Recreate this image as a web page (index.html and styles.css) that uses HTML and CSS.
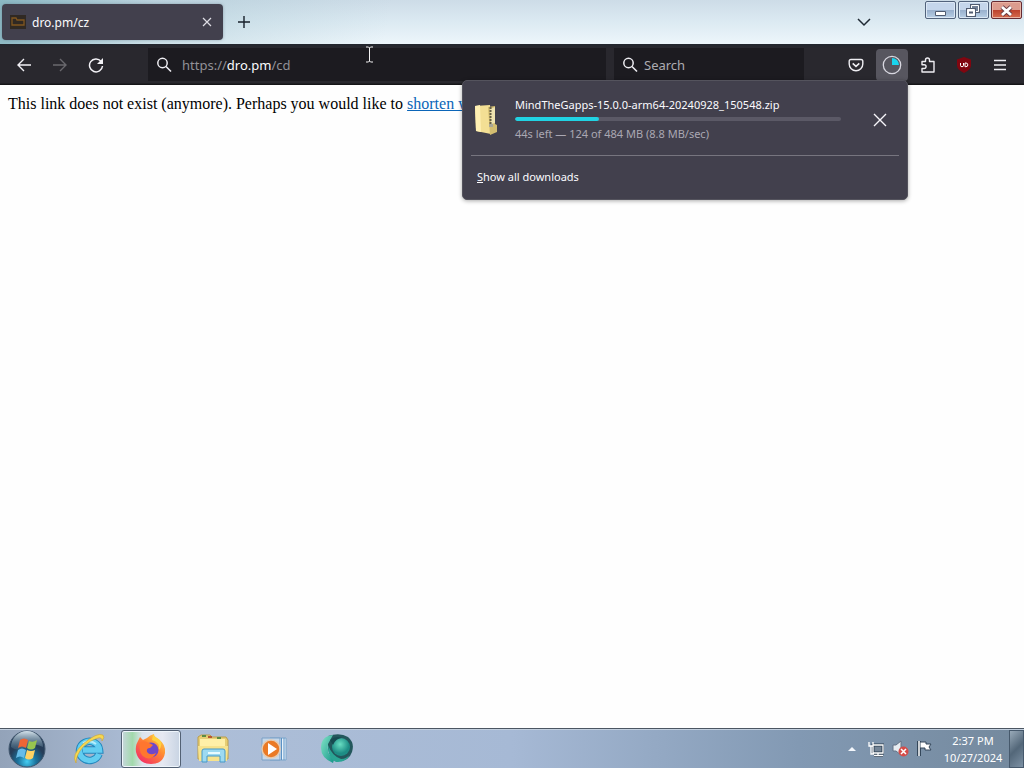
FILE: index.html
```
<!DOCTYPE html>
<html lang="en">
<head>
<meta charset="utf-8">
<title>dro.pm/cz</title>
<link rel="stylesheet" href="styles.css">
</head>
<body>
<div class="desktop">
  <header class="titlebar">
    <div class="tab">
      <svg class="favicon" width="16" height="14" viewBox="0 0 16 14"><path fill="#302923" d="M0 0h16v14H0z"/><path d="M2 10V3h4l1 2h7v5z" fill="none" stroke="#80561f" stroke-width="1.3"/></svg>
      <span class="tab-title">dro.pm/cz</span>
      <button class="tab-close" aria-label="Close tab"><svg width="10" height="10" viewBox="0 0 10 10"><path d="M1 1l8 8M9 1L1 9" stroke="#dedde4" stroke-width="1.2"/></svg></button>
    </div>
    <button class="new-tab" aria-label="New tab"><svg width="12" height="12" viewBox="0 0 12 12"><path d="M6 0v12M0 6h12" stroke="#17202a" stroke-width="1.4"/></svg></button>
    <button class="all-tabs" aria-label="List all tabs"><svg width="14" height="9" viewBox="0 0 14 9"><path d="M1 1l6 6 6-6" fill="none" stroke="#202a34" stroke-width="1.5"/></svg></button>
    <div class="window-controls">
      <button aria-label="Minimize"><svg width="31" height="17" viewBox="0 0 31 17"><path d="M10.500 9.500h10v4h-10z" fill="#fff" stroke="#505b70"/></svg></button>
      <button aria-label="Restore"><svg width="31" height="17" viewBox="0 0 31 17"><path d="M13.500 3.500h7v6h-7z" fill="#a0b3cd" stroke="#505b70" stroke-width="3"/><path d="M13.500 3.500h7v6h-7z" fill="#738197" stroke="#fff"/><path d="M9.500 7.500h7v6h-7z" fill="#a0b3cd" stroke="#505b70" stroke-width="3"/><path d="M9.500 7.500h7v6h-7z" fill="#fff" stroke="#fff"/><path d="M11 9.500h4v2h-4z" fill="#505b70"/></svg></button>
      <button class="win-close" aria-label="Close"><svg width="31" height="17" viewBox="0 0 31 17"><path d="M11 5l9 8M20 5l-9 8" stroke="#683b42" stroke-width="4.500"/><path d="M11 5l9 8M20 5l-9 8" stroke="#fff" stroke-width="2.800"/></svg></button>
    </div>
  </header>

  <nav class="toolbar">
    <div class="nav-buttons">
      <button aria-label="Back"><svg width="16" height="16" viewBox="0 0 16 16"><path d="M15 8H2M8 2L2 8l6 6" fill="none" stroke="#f2f1f6" stroke-width="1.400"/></svg></button>
      <button aria-label="Forward" disabled><svg width="16" height="16" viewBox="0 0 16 16"><path d="M1 8h13M8 2l6 6-6 6" fill="none" stroke="#69686d" stroke-width="1.400"/></svg></button>
      <button aria-label="Reload"><svg width="16" height="16" viewBox="0 0 16 16"><path d="M13 4.200A6.500 6.500 0 1 0 14.500 9" fill="none" stroke="#f2f1f6" stroke-width="1.500"/><path d="M15 1v6H9z" fill="#f2f1f6"/></svg></button>
    </div>
    <div class="field address">
      <svg width="16" height="16" viewBox="0 0 16 16"><circle cx="6.500" cy="6" r="4.700" fill="none" stroke="#eeedf2" stroke-width="1.500"/><path d="M10 9.500l5 5" stroke="#eeedf2" stroke-width="1.600"/></svg>
      <div class="url" role="textbox" aria-label="Address" contenteditable="true" spellcheck="false">https://<span class="domain">dro.pm</span>/cd</div>
    </div>
    <label class="field search">
      <svg width="16" height="16" viewBox="0 0 16 16"><circle cx="6.500" cy="6" r="4.700" fill="none" stroke="#eeedf2" stroke-width="1.500"/><path d="M10 9.500l5 5" stroke="#eeedf2" stroke-width="1.600"/></svg>
      <input type="text" placeholder="Search" aria-label="Search">
    </label>
    <div class="tools">
      <button aria-label="Pocket"><svg width="16" height="16" viewBox="0 0 16 16"><path d="M3 2.500h10q1.800 0 1.800 1.800V7a6.800 6.800 0 0 1-13.600 0V4.300Q1.200 2.500 3 2.500z" fill="none" stroke="#eeedf2" stroke-width="1.400"/><path d="M4.700 6.300L8 9.300l3.300-3" fill="none" stroke="#eeedf2" stroke-width="1.600"/></svg></button>
      <button class="active" aria-label="Downloads"><svg width="20" height="20" viewBox="0 0 20 20"><circle cx="10" cy="10" r="8.700" fill="none" stroke="#d8d7e0" stroke-width="1.300"/><path d="M10 10V3a7 7 0 0 1 7 7z" fill="#19d5ed"/></svg></button>
      <button aria-label="Extensions"><svg width="16" height="18" viewBox="0 0 16 18"><path d="M2 5.500h3.500V4a2 2 0 0 1 4 0v1.500H14V16H2v-3.500h2.200a1.900 1.900 0 0 0 0-3.800H2z" fill="none" stroke="#eeedf2" stroke-width="1.400" stroke-linejoin="round"/></svg></button>
      <button aria-label="uBlock Origin"><svg width="16" height="16" viewBox="0 0 16 16"><path d="M8 0l7 2.500v6q0 4-7 7.500-7-3.500-7-7.500v-6z" fill="#800610"/><path d="M4.500 6v2.500q0 1.200 1.500 1.200t1.500-1.200V6M9 6v3.700h1q1.800 0 1.800-1.800T10 6z" fill="none" stroke="#fff"/></svg></button>
      <button aria-label="Menu"><svg width="14" height="12" viewBox="0 0 14 12"><path d="M1 1.500h12M1 6h12M1 10.500h12" stroke="#f0eff4" stroke-width="1.300"/></svg></button>
    </div>
  </nav>

  <main class="page">
    <p>This link does not exist (anymore). Perhaps you would like to <a href="#">shorten w</a></p>
  </main>

  <section class="downloads" aria-label="Downloads">
    <div class="download">
      <svg class="zip" width="24" height="32" viewBox="0 0 24 32"><path d="M1 2l15-1 1 29-15-3z" fill="#f3df94"/><path d="M1 2l5-1 1 27-5-1z" fill="#fff0b3"/><path d="M14 3l7-1v18l2 1v7l-7 3z" fill="#d3bd70"/><path d="M16 5l5-2v16l-4 1z" fill="#eee3b0"/><path d="M16.500 3v17" stroke="#655f46" stroke-width="2" stroke-dasharray="2 1"/><path d="M15 20h4v3h-4z" fill="#aaa797"/></svg>
      <div class="details">
        <div class="filename">MindTheGapps-15.0.0-arm64-20240928_150548.zip</div>
        <progress value="124" max="484" aria-label="Download progress"></progress>
        <div class="status">44s left — 124 of 484 MB (8.8 MB/sec)</div>
      </div>
      <button class="cancel" aria-label="Cancel download"><svg width="14" height="14" viewBox="0 0 14 14"><path d="M1 1l12 12M13 1L1 13" stroke="#f7f6fb" stroke-width="1.400"/></svg></button>
    </div>
    <button class="show-all"><u>S</u>how all downloads</button>
  </section>

  <svg class="cursor" width="9" height="17" viewBox="0 0 9 17"><path d="M1 1h2.500l1 1 1-1H8M1 16h2.500l1-1 1 1H8M4.500 2v13" fill="none" stroke="#f4f4f4"/></svg>

  <footer class="taskbar">
    <button class="start" aria-label="Start"><svg width="40" height="38" viewBox="0 0 40 38">
      <defs><radialGradient id="orb" cy="85%"><stop offset="0" stop-color="#45cdf2"/><stop offset=".5" stop-color="#1b739d"/><stop offset="1" stop-color="#263d58"/></radialGradient><linearGradient id="shine" x2="0" y2="1"><stop stop-color="#d5e3ec"/><stop offset="1" stop-color="#577b92" stop-opacity=".3"/></linearGradient></defs>
      <circle cx="20" cy="19" r="18" fill="url(#orb)" stroke="#41576e"/><path d="M4 17A16 16 0 0 1 36 17Q27 12 20 17 10 22 4 17z" fill="url(#shine)"/>
      <path d="M13 10q4-3 8 0l-2 8q-4-3-8 0z" fill="#ed6536"/><path d="M22 11q4 2 8-1l-2 8q-4 3-8 0z" fill="#98c54f"/><path d="M11 20q4-3 8 0l-2 8q-4-3-8 0z" fill="#66bce8"/><path d="M20 20q4 2 8 0l-2 8q-4 3-8 0z" fill="#ffd263"/></svg></button>
    <button class="task" aria-label="Internet Explorer"><svg width="32" height="32" viewBox="0 0 32 32"><path d="M26 21a10 9.500 0 1 1 .5-4H10" fill="none" stroke="#2387bd" stroke-width="7.500"/><path d="M26 21a10 9.500 0 1 1 .5-4H10" fill="none" stroke="#62cdf1" stroke-width="5.500"/><path d="M10 10q7-4 13 1" fill="none" stroke="#b4edfc" stroke-width="2"/><path d="M3 30Q-2 22 10 11 24-1 30 2q2 2-1 6 0-4-4-3-8 2-15 9Q3 22 3 30z" fill="#f7d850" stroke="#c9a137" stroke-width=".6"/></svg></button>
    <button class="task selected" aria-label="Firefox"><svg width="32" height="32" viewBox="0 0 32 32"><defs><linearGradient id="fire" x1="1" x2=".2" y2="1"><stop stop-color="#ffe34b"/><stop offset=".45" stop-color="#ff8a32"/><stop offset="1" stop-color="#f42b67"/></linearGradient></defs><path d="M3 8l2-4 3 3 4-2q3-3 7-4 0 3 4 5 8 5 7 14-2 11-14 11T1 19q-1-6 2-11z" fill="url(#fire)"/><circle cx="16" cy="17" r="7.500" fill="#7048c9"/><path d="M5 9q5-2 9 1l4 2-3 3q-4 0-3 4 3 4 9 1-3 7-10 5-8-3-6-16z" fill="#ff762f"/><path d="M17 7q8 2 7 10 4-5 1-10l-7-5z" fill="#ffd13e"/></svg></button>
    <button class="task" aria-label="File Explorer"><svg width="34" height="32" viewBox="0 0 34 32"><path d="M2 4l3-2h9l2 2h14l2 3v19H2z" fill="#e7ce74" stroke="#ba9d4c"/><path d="M4 6h25v18H4z" fill="#fff0a8"/><path d="M6 3h4M21 5h4" stroke="#5b8c44" stroke-width="2"/><path d="M12 4h4" stroke="#b75734" stroke-width="2"/><path d="M2 13h30l-1 15H3z" fill="#f7e38d"/><path d="M6 29V18q0-2 2-2h19q2 0 2 2v11h-5v-6H11v6z" fill="#9ddaf1" stroke="#4799c7"/><path d="M12 20h12" stroke="#e8fbff" stroke-width="2"/></svg></button>
    <button class="task" aria-label="Windows Media Player"><svg width="28" height="26" viewBox="0 0 28 26"><path d="M9 2h16v22H9z" fill="#e9f2fa" stroke="#7ba5cb"/><path d="M20.500 2v22M23 2v22" stroke="#5b92c5"/><path d="M1 2h18v22H1z" fill="#c6d8ea" stroke="#7aa0c6"/><circle cx="10" cy="13" r="9" fill="#ea7a25" stroke="#e6cbb0" stroke-width="1.500"/><path d="M7 7l9 6-9 6z" fill="#fff"/></svg></button>
    <button class="task" aria-label="Media application"><svg width="34" height="32" viewBox="0 0 34 32"><defs><linearGradient id="swirl" x2="1" y2="1"><stop stop-color="#83e5c7"/><stop offset="1" stop-color="#159589"/></linearGradient><radialGradient id="ball" cx="45%" cy="35%"><stop stop-color="#68ddc2"/><stop offset="1" stop-color="#1d8d85"/></radialGradient></defs><path d="M8 3Q20-1 28 4q7 6 4 15-3 9-13 9Q9 26 8 15z" fill="#23575c"/><circle cx="21" cy="14" r="9" fill="url(#ball)"/><path d="M13 2Q1 3 1 15q0 10 12 15l1-3Q6 20 8 11z" fill="url(#swirl)"/><path d="M8 12q4 11 13 14 6 0 9-5-4 9-14 8Q8 26 8 12z" fill="#2aa594"/><path d="M10 7q6-5 12-2-6 0-9 7z" fill="#164b51"/></svg></button>
    <div class="tray">
      <button aria-label="Show hidden icons"><svg width="8" height="5" viewBox="0 0 8 5"><path d="M0 5l4-4 4 4z" fill="#f3f7fc"/></svg></button>
      <button aria-label="Network"><svg width="16" height="16" viewBox="0 0 16 16"><path d="M5 4h10v8H5zM10 12v3M6 15h9" fill="#738496" stroke="#2b3c4f" stroke-width="3"/><path d="M5 4h10v8H5zM10 12v2.500M6 14.500h9M1 1v4h4V1M3 5v8h3" fill="none" stroke="#fff" stroke-width="1.300"/></svg></button>
      <button aria-label="Volume muted"><svg width="17" height="17" viewBox="0 0 17 17"><path d="M1 5h3l5-4v14l-5-4H1z" fill="#e8edf2" stroke="#647386"/><circle cx="11.500" cy="11.500" r="5" fill="#d54c49"/><path d="M9 9l5 5M14 9l-5 5" stroke="#fff" stroke-width="1.500"/></svg></button>
      <button aria-label="Action Center"><svg width="16" height="17" viewBox="0 0 16 17"><path d="M2 1v15" stroke="#34475a" stroke-width="4"/><path d="M3 2h6v2h5l-2 3 2 3H8V8H3z" fill="#fff" stroke="#34475a"/><path d="M2 1v15" stroke="#fff" stroke-width="1.500"/></svg></button>
    </div>
    <time class="clock" datetime="2024-10-27T14:37"><span>2:37 PM</span><span>10/27/2024</span></time>
    <button class="show-desktop" aria-label="Show desktop"></button>
  </footer>
</div>
</body>
</html>
```
FILE: styles.css
```
* { box-sizing: border-box; }
body { margin: 0; font-family: "Noto Sans", "Open Sans", sans-serif; color: #fbfbfe; }
button { border: 0; padding: 0; background: none; color: inherit; font: inherit; display: flex; align-items: center; justify-content: center; flex-shrink: 0; }
svg { display: block; flex-shrink: 0; }
.desktop { position: relative; min-height: 100vh; display: flex; flex-direction: column; background: #fefefe; }

.titlebar { height: 44px; display: flex; padding: 4px 2px 4px; background: linear-gradient(100deg, #8bb8c3 0, #a9c9d480 15%, #c9dbe600 38%), linear-gradient(#cddce7, #dceaf2 50%, #edf6fb); }
.tab { width: 221px; height: 36px; background: #42404d; border-radius: 4px; display: flex; align-items: center; padding: 0 6px 0 8px; box-shadow: 0 0 3px #53657780; }
.tab-title { flex: 1; margin-left: 6px; font-size: 12px; }
.tab-close { width: 20px; height: 20px; }
.new-tab { width: 42px; height: 36px; }
.all-tabs { width: 36px; height: 36px; margin-left: auto; }
.window-controls { display: flex; gap: 2px; margin: -3px 0 0 43px; }
.window-controls button { width: 31px; height: 18px; border: 1px solid #52637c; border-radius: 2px; background: linear-gradient(#c5d6eb 48%, #98afcc 50%, #b8cfe5); box-shadow: inset 0 0 0 1px #dce8f5; overflow: hidden; }
.window-controls .win-close { border-color: #662b32; background: linear-gradient(#dc9c8e 48%, #bc412d 50%, #d66c4f); box-shadow: inset 0 0 0 1px #eab4a5; }

.toolbar { height: 41px; display: flex; align-items: center; background: linear-gradient(#22262e, #29282e 10%, #29282e 94%, #101012); padding: 0 6px; }
.nav-buttons { width: 142px; display: flex; }
.nav-buttons button { width: 36px; height: 32px; }
.field { height: 33px; display: flex; align-items: center; gap: 10px; padding: 0 8px; background: #1c1b20; font-size: 13px; min-width: 0; }
.address { flex: 7 1 0; color: #929197; }
.url { flex: 1; outline: 0; white-space: nowrap; }
.domain { color: #fbfbfe; }
.search { flex: 0 1 190px; margin-left: 8px; gap: 6px; }
.search input { width: 100%; min-width: 0; border: 0; padding: 0; outline: 0; background: transparent; color: #fbfbfe; font: inherit; }
.search input::placeholder { color: #acabb1; opacity: 1; }
.tools { display: flex; margin-left: 34px; }
.tools button { width: 36px; height: 32px; }
.tools .active { width: 32px; margin: 0 2px; background: #57565f; border-radius: 4px; }

.page { flex: 1; padding: 9px 8px; color: #000; font: 16px/20px "Liberation Serif", "Times New Roman", serif; }
.page p { margin: 0; }
.page a { color: #0b65b8; }

.downloads { position: absolute; top: 80px; right: 116px; width: 446px; background: #42404d; border: 1px solid #54535d; border-radius: 5px; box-shadow: 0 1px 4px #0005; padding: 8px; font-size: 11px; line-height: 16px; }
.download { display: flex; align-items: center; padding: 8px 9px 13px 3px; border-bottom: 1px solid #77757f; }
.details { flex: 1; margin: 0 29px 0 17px; }
.filename { white-space: nowrap; }
progress { appearance: none; display: block; width: 100%; height: 4px; margin: 4px 0 5px; border: 0; border-radius: 2px; overflow: hidden; background: #5b5966; }
progress::-webkit-progress-bar { background: #5b5966; }
progress::-webkit-progress-value { background: #21d3e3; border-radius: 2px; }
.status { color: #aaa8b3; }
.cancel { width: 20px; height: 24px; }
.show-all { display: block; width: 100%; padding: 13px 6px 6px; text-align: left; }
.cursor { position: absolute; left: 365px; top: 46px; }

.taskbar { height: 40px; display: flex; align-items: center; background: linear-gradient(90deg, #93a3b9 0, #aebfd8 15%, #a6b9d5 50%, #8299b3 78%, #74899d 100%); border-top: 1px solid #4b5662; box-shadow: inset 0 1px #c3d0df; padding-left: 7px; }
.start { width: 40px; height: 38px; margin-right: 12px; }
.task { width: 60px; height: 38px; margin-right: 2px; }
.task.selected { border: 1px solid #536174; border-radius: 3px; background: linear-gradient(90deg, #c7d7dd, #a2d9ac 18%, #dce3ed 35%, #e6e9f2 70%, #c8d4e3); box-shadow: inset 0 0 0 1px #eef5fb; }
.tray { display: flex; align-items: center; gap: 8px; margin-left: auto; }
.tray button { height: 20px; min-width: 8px; }
.tray button:first-child { margin-right: 4px; }
.clock { width: 76px; padding-left: 4px; text-align: center; font-size: 11px; line-height: 17px; color: #fff; }
.clock span { display: block; }
.show-desktop { width: 15px; height: 38px; border: 1px solid #46596c; background: linear-gradient(135deg, #99aab9, #536779 50%, #7d91a4); }
```
